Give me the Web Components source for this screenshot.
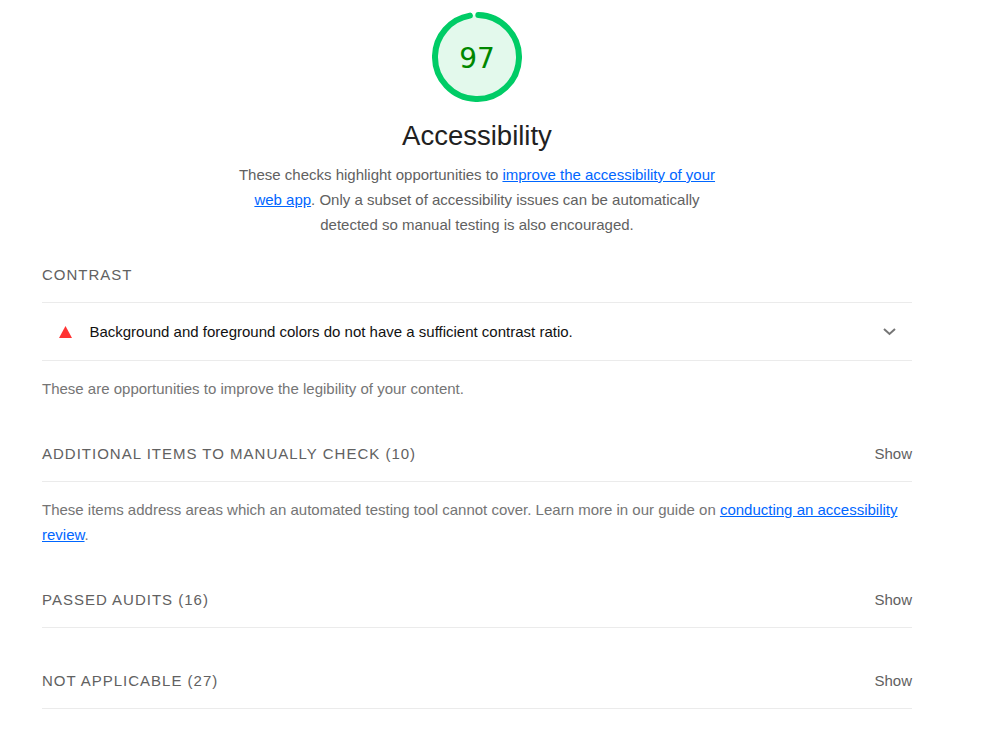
<!DOCTYPE html>
<html lang="en"><head><meta charset="utf-8"><title>Accessibility</title>
<style>
body{margin:0;background:#fff;font:15px/25px "Liberation Sans",Arial,sans-serif;color:#616161}
a{color:#06f;text-decoration:underline}
</style></head><body>
<accessibility-report></accessibility-report>
<script>
const define=(name,html)=>customElements.define(name,class extends HTMLElement{
  connectedCallback(){
    if(this.shadowRoot)return;
    const t=document.createElement('template');
    t.innerHTML=html;
    this.attachShadow({mode:'open'}).append(t.content.cloneNode(true));
  }
});
define('score-gauge',`<style>
:host{display:grid;width:90px;height:90px;place-items:center}
svg,.n{grid-area:1/1}
.n{font:28px/34px "DejaVu Sans",sans-serif;color:#080;padding-top:4px}
</style><svg width="90" height="90" viewBox="0 0 90 90"><circle cx="45" cy="45" r="42" fill="#e3f9ec"/><circle cx="45" cy="45" r="42" fill="none" stroke="#0c6" stroke-width="6" stroke-linecap="round" stroke-dasharray="255 263.9" transform="rotate(-88.2 45 45)"/></svg><span class="n"><slot></slot></span>`);
define('category-header',`<style>
:host{display:flex;flex-direction:column;align-items:center;width:480px;margin:0 auto;text-align:center}
h1{font-weight:400;font-size:27.5px;line-height:34px;color:#212121;margin:17px 0 9px}
.d{white-space:nowrap}
</style><slot name="score"></slot><h1><slot name="title"></slot></h1><div class="d"><slot></slot></div>`);
define('audit-heading',`<style>
:host{display:flex;justify-content:space-between;height:40px;border-bottom:1px solid #ebebeb;white-space:nowrap}
.t{letter-spacing:1px;text-transform:uppercase}
</style><span class="t"><slot></slot></span><slot name="action"></slot>`);
define('audit-row',`<style>
:host{display:flex;align-items:center;height:57px;border-bottom:1px solid #ebebeb;padding:0 16px 0 17px;color:#111}
.t{flex:1;margin-left:17.4px}
</style><svg width="13" height="12"><path d="M6.5 0L13 12H0z" fill="#f33"/></svg><span class="t"><slot></slot></span><svg width="13" height="8" viewBox="0 0 13 8"><path d="M1 1l5.5 5L12 1" fill="none" stroke="#757575" stroke-width="2"/></svg>`);
define('audit-note',`<style>:host{display:block;color:#757575}</style><slot></slot>`);
define('accessibility-report',`<style>
:host{display:block;width:870px;padding:12px 0 0 42px}
a{color:#06f}
.a{margin-top:25px}.b{margin-top:15px}.c{margin-top:40px}.d{margin-top:15px}.e{margin-top:40px}.f{margin-top:40px}
</style>
<category-header><score-gauge slot="score">97</score-gauge><span slot="title">Accessibility</span>These checks highlight opportunities to <a href="#">improve the accessibility of your<br>web app</a>. Only a subset of accessibility issues can be automatically<br>detected so manual testing is also encouraged.</category-header>
<audit-heading class="a">Contrast</audit-heading>
<audit-row>Background and foreground colors do not have a sufficient contrast ratio.</audit-row>
<audit-note class="b">These are opportunities to improve the legibility of your content.</audit-note>
<audit-heading class="c">Additional items to manually check (10)<span slot="action">Show</span></audit-heading>
<audit-note class="d">These items address areas which an automated testing tool cannot cover. Learn more in our guide on <a href="#">conducting an accessibility<br>review</a>.</audit-note>
<audit-heading class="e">Passed audits (16)<span slot="action">Show</span></audit-heading>
<audit-heading class="f">Not applicable (27)<span slot="action">Show</span></audit-heading>`);
</script></body></html>
